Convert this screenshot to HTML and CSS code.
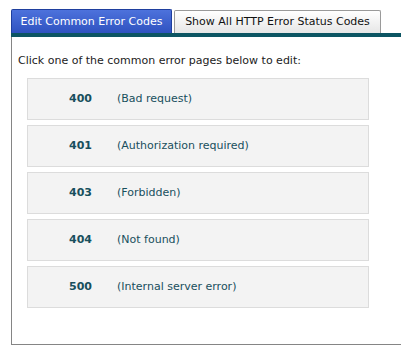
FILE: index.html
```html
<!DOCTYPE html>
<html>
<head>
    <meta charset="UTF-8">
    <title>Error Pages</title>
    <link rel="stylesheet" href="styles.css">
</head>
<body>

<div class="m-tabs">
    <a href="javascript:;" class="u-tab on">Edit Common Error Codes</a>
    <a href="javascript:;" class="u-tab u-all">Show All HTTP Error Status Codes</a>
</div>
<div class="u-bar"></div>
<div class="m-panel">
    <p class="u-intro">Click one of the common error pages below to edit:</p>
    <ul class="u-list">
        <li><a href="javascript:;"><b>400</b><span>(Bad request)</span></a></li>
        <li><a href="javascript:;"><b>401</b><span>(Authorization required)</span></a></li>
        <li><a href="javascript:;"><b>403</b><span>(Forbidden)</span></a></li>
        <li><a href="javascript:;"><b>404</b><span>(Not found)</span></a></li>
        <li><a href="javascript:;"><b>500</b><span>(Internal server error)</span></a></li>
    </ul>
</div>

</body>
</html>
```

FILE: styles.css
```css
*{ margin: 0; padding: 0; text-decoration: none;}
body {font-family: "DejaVu Sans", Verdana, sans-serif;font-size: 11px;color: #222;background: #fff;}
.m-tabs {display: flex;align-items: flex-end;gap: 2px;padding: 9px 0 0 11px;}
.u-tab {display: block;width: 159px;height: 22px;line-height: 22px;text-align: center;border: 1px solid #9a9a9a;border-bottom: none;border-radius: 2px 2px 0 0;background: linear-gradient(#ffffff, #e6e6e6);color: #111;font-size: 11px;}
.u-tab.on {height: 23px;line-height: 23px;border-color: #1f3f9e;background: linear-gradient(#4d72dc, #2f52c0);color: #fff;}
.u-all {width: 205px;}
.u-bar {height: 4px;margin-left: 11px;background: #0c5563;}
.m-panel {margin-left: 11px;height: 307px;border-left: 1px solid #858585;border-bottom: 1px solid #858585;}
.u-intro {padding: 17px 0 0 6px;height: 24px;line-height: 14px;}
.u-list {list-style: none;padding-left: 15px;}
.u-list li {width: 340px;height: 40px;margin-bottom: 5px;border: 1px solid #dcdcdc;background: #f3f3f3;}
.u-list a {display: flex;align-items: center;height: 39px;color: #184f5d;}
.u-list b {width: 64px;text-align: right;}
.u-list span {margin-left: 25px;}
```
